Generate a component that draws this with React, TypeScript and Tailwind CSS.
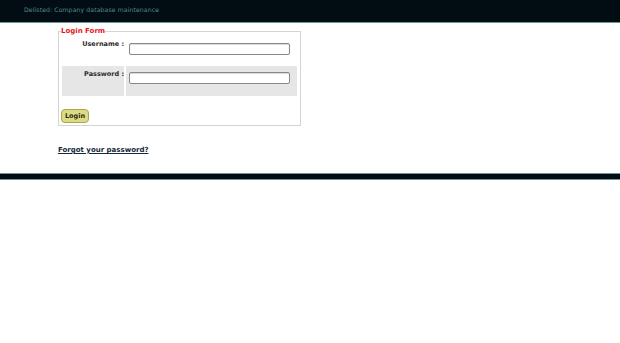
export default function App() {
  return (
    <div className="min-h-screen bg-white font-['DejaVu_Sans',Verdana,sans-serif]">
      {/* Header */}
      <div className="h-[23px] bg-[#020d13] border-b border-[#6a9798] flex items-center pl-[24px] pb-[3px]">
        <span className="text-[6.2px] tracking-[0.08px] text-[#558890]">Delisted: Company database maintenance</span>
      </div>

      <div className="pl-[58px] pt-[3px]">
        <fieldset className="w-[243px] border border-[#d4d4d4] px-[3px] pb-[2px]">
          <legend className="text-[7px] font-bold text-[#e8161a] leading-[10px] -ml-[1px]">Login Form</legend>
          <div className="flex flex-col gap-[2px] pt-[2px]">
            <div className="flex gap-[2px] h-[26px]">
              <div className="w-[62px] text-right pt-[1px] text-[6.5px] leading-[10px] font-bold text-[#2b2b2b]">Username :</div>
              <div className="flex-1 pt-[5px] pl-[3px]">
                <input type="text" className="block w-[161px] h-[12px] border border-[#888] rounded-[2px] bg-white shadow-[inset_0_1px_1px_rgba(0,0,0,0.15)]" />
              </div>
            </div>
            <div className="flex gap-[2px] h-[30px]">
              <div className="w-[62px] bg-[#e6e6e6] text-right pt-[3px] text-[6.5px] leading-[10px] font-bold text-[#2b2b2b]">Password :</div>
              <div className="flex-1 bg-[#e6e6e6] pt-[6px] pl-[3px]">
                <input type="password" className="block w-[161px] h-[12px] border border-[#888] rounded-[2px] bg-white shadow-[inset_0_1px_1px_rgba(0,0,0,0.15)]" />
              </div>
            </div>
          </div>
          <div className="pt-[13px]">
            <button className="block -ml-[1px] w-[28px] h-[14px] rounded-[4px] border border-[#a9a84c] bg-[#dcdb84] text-[6.5px] font-bold text-[#2a2a10] leading-none">
              Login
            </button>
          </div>
        </fieldset>

        <div className="pt-[19px] text-[7px] leading-[10px]">
          <a href="#" className="font-bold text-[#14283a] underline">Forgot your password?</a>
        </div>
      </div>

      {/* Footer bar */}
      <div className="mt-[18px] h-[7px] bg-[#020d13] border-y border-[#6a9798]" />
    </div>
  );
}
